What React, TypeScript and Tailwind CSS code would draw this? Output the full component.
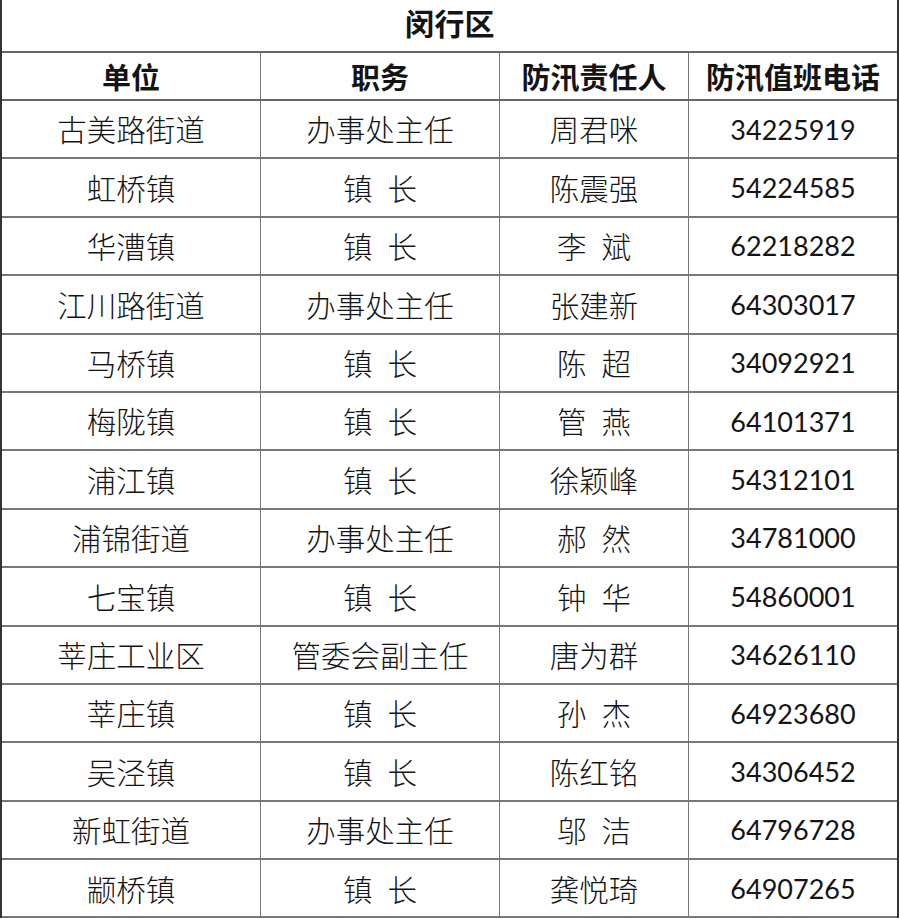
const rows: [string, string, string, string][] = [
  ['古美路街道', '办事处主任', '周君咪', '34225919'],
  ['虹桥镇', '镇 长', '陈震强', '54224585'],
  ['华漕镇', '镇 长', '李 斌', '62218282'],
  ['江川路街道', '办事处主任', '张建新', '64303017'],
  ['马桥镇', '镇 长', '陈 超', '34092921'],
  ['梅陇镇', '镇 长', '管 燕', '64101371'],
  ['浦江镇', '镇 长', '徐颖峰', '54312101'],
  ['浦锦街道', '办事处主任', '郝 然', '34781000'],
  ['七宝镇', '镇 长', '钟 华', '54860001'],
  ['莘庄工业区', '管委会副主任', '唐为群', '34626110'],
  ['莘庄镇', '镇 长', '孙 杰', '64923680'],
  ['吴泾镇', '镇 长', '陈红铭', '34306452'],
  ['新虹街道', '办事处主任', '邬 洁', '64796728'],
  ['颛桥镇', '镇 长', '龚悦琦', '64907265'],
];

const cjk = { fontFamily: '"Noto Sans CJK SC", sans-serif' };
const num = { fontFamily: 'Lato, "Open Sans", sans-serif' };

function Spaced({ text }: { text: string }) {
  if (!text.includes(' ')) return <>{text}</>;
  return (
    <span className="inline-flex gap-[15px]">
      {text.split(' ').map((t) => (
        <span key={t}>{t}</span>
      ))}
    </span>
  );
}

export default function App() {
  return (
    <div className="w-[900px] h-[919px] overflow-hidden bg-white text-[#141414]" style={cjk}>
      <div className="w-[899px] border-l-2 border-r-2 border-[#333]">
        <div className="h-[53px] flex items-center justify-center border-b-2 border-[#666] text-[30px] font-bold leading-none pb-[8px]">
          闵行区
        </div>
        <div className="grid grid-cols-[259px_239px_189px_1fr] h-[48px] border-b-2 border-[#666] text-[29px] font-bold leading-none">
          {['单位', '职务', '防汛责任人', '防汛值班电话'].map((h, i) => (
            <div
              key={h}
              className={`flex items-center justify-center ${i < 3 ? 'border-r border-[#777]' : ''}`}
            >
              {h}
            </div>
          ))}
        </div>
        {rows.map((r) => (
          <div
            key={r[0]}
            className="grid grid-cols-[259px_239px_189px_1fr] h-[58.4px] border-b-2 border-[#777] text-[29.5px] font-light leading-none"
          >
            <div className="flex items-center justify-center border-r border-[#777]">{r[0]}</div>
            <div className="flex items-center justify-center border-r border-[#777]">
              <Spaced text={r[1]} />
            </div>
            <div className="flex items-center justify-center border-r border-[#777]">
              <Spaced text={r[2]} />
            </div>
            <div className="flex items-center justify-center text-[27px] font-normal" style={num}>
              {r[3]}
            </div>
          </div>
        ))}
      </div>
    </div>
  );
}
